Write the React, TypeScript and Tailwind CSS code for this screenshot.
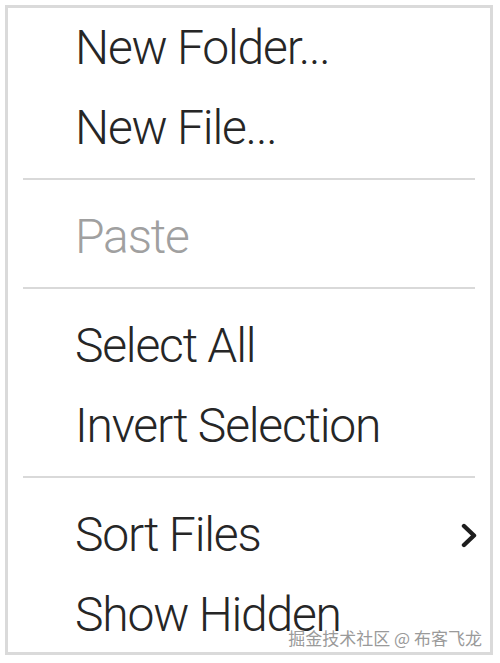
import React from "react";

const Item = ({ label, disabled, sub }: { label: string; disabled?: boolean; sub?: boolean }) => (
  <div className="relative flex h-[80px] items-center pl-[67px]">
    <span
      className={`text-[48px] font-light leading-none tracking-[-1.2px] ${disabled ? "text-[#a0a0a0]" : "text-[#262626]"}`}
      style={{ fontFamily: "Roboto, 'Noto Sans', sans-serif" }}
    >
      {label}
    </span>
    {sub && (
      <svg className="absolute right-[12px] top-[28px]" width="18" height="26" viewBox="0 0 18 26">
        <polyline points="4,3 14,12.5 4,22" fill="none" stroke="#1e1e1e" strokeWidth="4.4" strokeLinecap="round" strokeLinejoin="round" />
      </svg>
    )}
  </div>
);

const Divider = () => <div className="mx-[15px] mt-[10px] mb-[17px] h-[2px] bg-[#d9d9d9]" />;

export default function App() {
  return (
    <div className="h-[663px] w-[500px] bg-white pl-[5px] pt-[5px]">
      <div className="relative h-[650px] w-[488px] border-[3px] border-[#dadada] bg-white">
        <Item label="New Folder..." />
        <Item label="New File..." />
        <Divider />
        <Item label="Paste" disabled />
        <Divider />
        <Item label="Select All" />
        <Item label="Invert Selection" />
        <Divider />
        <Item label="Sort Files" sub />
        <Item label="Show Hidden" />
        <div
          className="absolute right-[8px] bottom-[6px] text-[17px] leading-none text-[#9a9a9a]"
          style={{
            fontFamily: "'Noto Sans CJK SC', 'Noto Sans', sans-serif",
            textShadow: "0 0 1px #fff, 0 0 2px #fff",
          }}
        >
          掘金技术社区 @ 布客飞龙
        </div>
      </div>
    </div>
  );
}
